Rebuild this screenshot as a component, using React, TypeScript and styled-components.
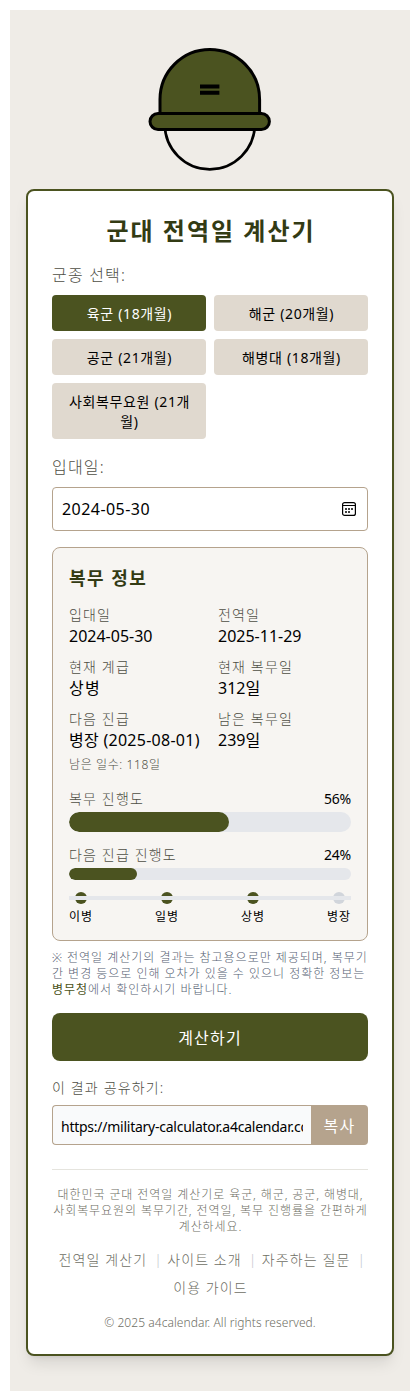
import React from 'react';
import styled, { createGlobalStyle } from 'styled-components';

const GlobalStyle = createGlobalStyle`
  *, *::before, *::after { box-sizing: border-box; }
  body {
    margin: 10px;
    background: #fff;
    color: #000;
    font-family: 'Noto Sans', 'Noto Sans CJK KR', sans-serif;
    font-size: 16px;
    line-height: 24px;
  }
  h1, h2, p { margin: 0; }
  button, input { font-family: inherit; font-weight: inherit; margin: 0; }
`;

const Page = styled.main`
  width: 400px;
  height: 1381px;
  padding: 28px 16px 0;
  background: #efece7;
`;

const Helmet = styled.svg`
  display: block;
  width: 128px;
  height: 128px;
  margin: 5px auto 18px;
`;

const Card = styled.section`
  padding: 24px;
  border: 2px solid #4b5320;
  border-radius: 8px;
  background: #fff;
  box-shadow: 0 10px 15px -3px rgba(0, 0, 0, 0.1), 0 4px 6px -4px rgba(0, 0, 0, 0.1);
`;

const Title = styled.h1`
  margin-bottom: 16px;
  padding-left: 2px;
  color: #333b14;
  font-size: 24px;
  line-height: 32px;
  letter-spacing: 2px;
  text-align: center;
  white-space: nowrap;
`;

const FieldLabel = styled.label`
  display: block;
  margin-bottom: 8px;
  color: #4e4e44;
  font-weight: 300;
  letter-spacing: 1.2px;
`;

const BranchGrid = styled.div`
  display: grid;
  grid-template-columns: 1fr 1fr;
  gap: 8px;
  margin-bottom: 16px;
`;

const BranchButton = styled.button<{ $active?: boolean }>`
  padding: 9px 11px 7px 12px;
  border: 0;
  border-radius: 4px;
  background: ${(p) => (p.$active ? '#4b5320' : '#e0d9cf')};
  color: ${(p) => (p.$active ? '#fff' : '#000')};
  font-size: 14px;
  line-height: 20px;
  letter-spacing: 0.65px;
`;

const DateField = styled.div`
  display: flex;
  align-items: center;
  justify-content: space-between;
  height: 44px;
  margin-bottom: 16px;
  padding: 0 10px 0 9px;
  border: 1px solid #b5a38d;
  border-radius: 4px;
  letter-spacing: 0.45px;
`;

const InfoBox = styled.section`
  padding: 16px;
  border: 1px solid #b5a38d;
  border-radius: 8px;
  background: #f7f5f2;
`;

const InfoTitle = styled.h2`
  margin-bottom: 12px;
  color: #333b14;
  font-size: 18px;
  line-height: 28px;
  letter-spacing: 1.5px;
`;

const InfoGrid = styled.div`
  display: grid;
  grid-template-columns: 1fr 1fr;
  gap: 8px 16px;
  margin-bottom: 16px;
`;

const SmallLabel = styled.p`
  height: 20px;
  color: #4e4e44;
  font-size: 14px;
  font-weight: 300;
  line-height: 22px;
  letter-spacing: 1.15px;
`;

const Value = styled.p<{ $spacing?: number }>`
  letter-spacing: ${(p) => p.$spacing ?? 0}px;
  white-space: nowrap;
`;

const Remaining = styled.p`
  height: 16px;
  margin-top: 4px;
  color: #4e4e44;
  font-size: 12px;
  font-weight: 300;
  line-height: 18px;
  letter-spacing: 0.6px;
`;

const ProgressHead = styled.div`
  display: flex;
  justify-content: space-between;
  margin-bottom: 4px;
`;

const Percent = styled.span`
  height: 20px;
  font-size: 14px;
  line-height: 22px;
  letter-spacing: -0.2px;
`;

const Track = styled.div<{ $height: number }>`
  height: ${(p) => p.$height}px;
  margin-bottom: 12px;
  border-radius: 10px;
  background: #e5e7eb;
  overflow: hidden;
`;

const Fill = styled.div`
  height: 100%;
  border-radius: 10px;
  background: #4b5320;
`;

const RankSteps = styled.div`
  position: relative;
  display: flex;
  justify-content: space-between;

  &::after {
    content: '';
    position: absolute;
    top: 4px;
    left: 0;
    right: 0;
    height: 4px;
    background: #e5e7eb;
  }
`;

const RankStep = styled.div`
  display: flex;
  flex-direction: column;
  align-items: center;
  gap: 4px;
  width: 24px;
  height: 32px;
  font-size: 12px;
  line-height: 18px;
  letter-spacing: 0.9px;
  white-space: nowrap;
`;

const Dot = styled.span<{ $reached: boolean }>`
  flex: none;
  width: 12px;
  height: 12px;
  border-radius: 50%;
  background: ${(p) => (p.$reached ? '#4b5320' : '#d1d5db')};
`;

const Notice = styled.p`
  margin-top: 9px;
  color: #566072;
  font-size: 12px;
  font-weight: 300;
  line-height: 16px;
  letter-spacing: 0.98px;
  white-space: nowrap;

  a {
    color: #4b5320;
    font-weight: 400;
  }
`;

const SubmitButton = styled.button`
  display: block;
  width: 100%;
  height: 48px;
  margin: 15px 0 16px;
  border: 0;
  border-radius: 8px;
  background: #4b5320;
  color: #fff;
  font-size: 16px;
  letter-spacing: 1.2px;
`;

const ShareRow = styled.div`
  display: flex;
  height: 40px;
  margin-top: 8px;
`;

const ShareInput = styled.input`
  flex: 1;
  min-width: 0;
  padding: 9px 8px 7px;
  border: 1px solid #b5a38d;
  border-right: 0;
  border-radius: 4px 0 0 4px;
  background: #f9fafb;
  color: #000;
  font-size: 14px;
  letter-spacing: -0.25px;
`;

const CopyButton = styled.button`
  width: 57px;
  padding: 0;
  border: 0;
  border-radius: 0 4px 4px 0;
  background: #b5a38d;
  color: #fff;
  font-size: 16px;
  letter-spacing: 1.4px;
`;

const Footer = styled.footer`
  margin-top: 24px;
  padding-top: 17px;
  border-top: 1px solid #e5e4de;
  color: #6e6e64;
  font-size: 12px;
  font-weight: 300;
  line-height: 16px;
  text-align: center;
`;

const Description = styled.p`
  padding-left: 1px;
  letter-spacing: 0.92px;
  white-space: nowrap;
`;

const FooterNav = styled.nav`
  display: flex;
  flex-wrap: wrap;
  justify-content: center;
  margin: 11px 0 13px;
  padding-left: 1px;
  font-size: 14px;
  line-height: 28px;
  letter-spacing: 1.1px;
  white-space: nowrap;
`;

const Separator = styled.span<{ $last: boolean }>`
  width: 12px;
  margin-right: ${(p) => (p.$last ? 0 : 8)}px;
  padding-left: 7px;
  color: #c4c8ce;
  letter-spacing: 0;
  text-align: left;
`;

const Copyright = styled.p`
  margin-bottom: -1px;
  letter-spacing: 0.06px;
`;

const CalendarIcon = () => (
  <svg width="16" height="16" viewBox="0 0 16 16" fill="none" stroke="#000">
    <rect x="1.6" y="1.6" width="12.8" height="12.8" rx="2" strokeWidth="1.2" />
    <path d="M1.5 4.5h13" />
    <path d="M7 8h2M10 8h2M4 11h2M7 11h2M4 8h2" strokeWidth="1.7" />
  </svg>
);

const branches = ['육군 (18개월)', '해군 (20개월)', '공군 (21개월)', '해병대 (18개월)', '사회복무요원 (21개월)'];
const ranks = ['이병', '일병', '상병', '병장'];
const links = ['전역일 계산기', '사이트 소개', '자주하는 질문', '이용 가이드'];

const details = [
  { label: '입대일', value: '2024-05-30' },
  { label: '전역일', value: '2025-11-29' },
  { label: '현재 계급', value: '상병', spacing: 1.2 },
  { label: '현재 복무일', value: '312일' },
  { label: '다음 진급', value: '병장 (2025-08-01)', spacing: 0.27, extra: '남은 일수: 118일' },
  { label: '남은 복무일', value: '239일' },
];

const progress = [
  { label: '복무 진행도', percent: '56%', width: 56.7, height: 20 },
  { label: '다음 진급 진행도', percent: '24%', width: 24.1, height: 12 },
];

export default function App() {
  return (
    <>
      <GlobalStyle />
      <Page>
        <Helmet viewBox="0 0 128 128" stroke="#000" strokeWidth="3">
          <circle cx="63.8" cy="81.3" r="45" fill="none" strokeWidth="2.7" />
          <path d="M14 72V56.5a49.8 50 0 0 1 99.6 0V72Z" fill="#4b5320" />
          <rect x="4" y="70.5" width="119.4" height="16" rx="8" fill="#4b5320" />
          <path d="M54 43.4h19.4M54 49.8h19.4" strokeWidth="4" />
        </Helmet>
        <Card>
          <Title>군대 전역일 계산기</Title>
          <FieldLabel>군종 선택:</FieldLabel>
          <BranchGrid>
            {branches.map((name, i) => (
              <BranchButton key={name} $active={i === 0}>{name}</BranchButton>
            ))}
          </BranchGrid>
          <FieldLabel>입대일:</FieldLabel>
          <DateField>
            <span>2024-05-30</span>
            <CalendarIcon />
          </DateField>
          <InfoBox>
            <InfoTitle>복무 정보</InfoTitle>
            <InfoGrid>
              {details.map((d) => (
                <div key={d.label}>
                  <SmallLabel>{d.label}</SmallLabel>
                  <Value $spacing={d.spacing}>{d.value}</Value>
                  {d.extra && <Remaining>{d.extra}</Remaining>}
                </div>
              ))}
            </InfoGrid>
            {progress.map((p) => (
              <div key={p.label}>
                <ProgressHead>
                  <SmallLabel>{p.label}</SmallLabel>
                  <Percent>{p.percent}</Percent>
                </ProgressHead>
                <Track $height={p.height}>
                  <Fill style={{ width: `${p.width}%` }} />
                </Track>
              </div>
            ))}
            <RankSteps>
              {ranks.map((rank, i) => (
                <RankStep key={rank}>
                  <Dot $reached={i < 3} />
                  <span>{rank}</span>
                </RankStep>
              ))}
            </RankSteps>
          </InfoBox>
          <Notice>
            ※ 전역일 계산기의 결과는 참고용으로만 제공되며, 복무기
            <br />간 변경 등으로 인해 오차가 있을 수 있으니 정확한 정보는
            <br />
            <a>병무청</a>에서 확인하시기 바랍니다.
          </Notice>
          <SubmitButton>계산하기</SubmitButton>
          <SmallLabel>이 결과 공유하기:</SmallLabel>
          <ShareRow>
            <ShareInput readOnly value="https://military-calculator.a4calendar.com" />
            <CopyButton>복사</CopyButton>
          </ShareRow>
          <Footer>
            <Description>
              대한민국 군대 전역일 계산기로 육군, 해군, 공군, 해병대,
              <br />
              사회복무요원의 복무기간, 전역일, 복무 진행률을 간편하게
              <br />
              계산하세요.
            </Description>
            <FooterNav>
              {links.map((link, i) => (
                <React.Fragment key={link}>
                  <a>{link}</a>
                  {i < links.length - 1 && <Separator $last={i === links.length - 2}>|</Separator>}
                </React.Fragment>
              ))}
            </FooterNav>
            <Copyright>© 2025 a4calendar. All rights reserved.</Copyright>
          </Footer>
        </Card>
      </Page>
    </>
  );
}
